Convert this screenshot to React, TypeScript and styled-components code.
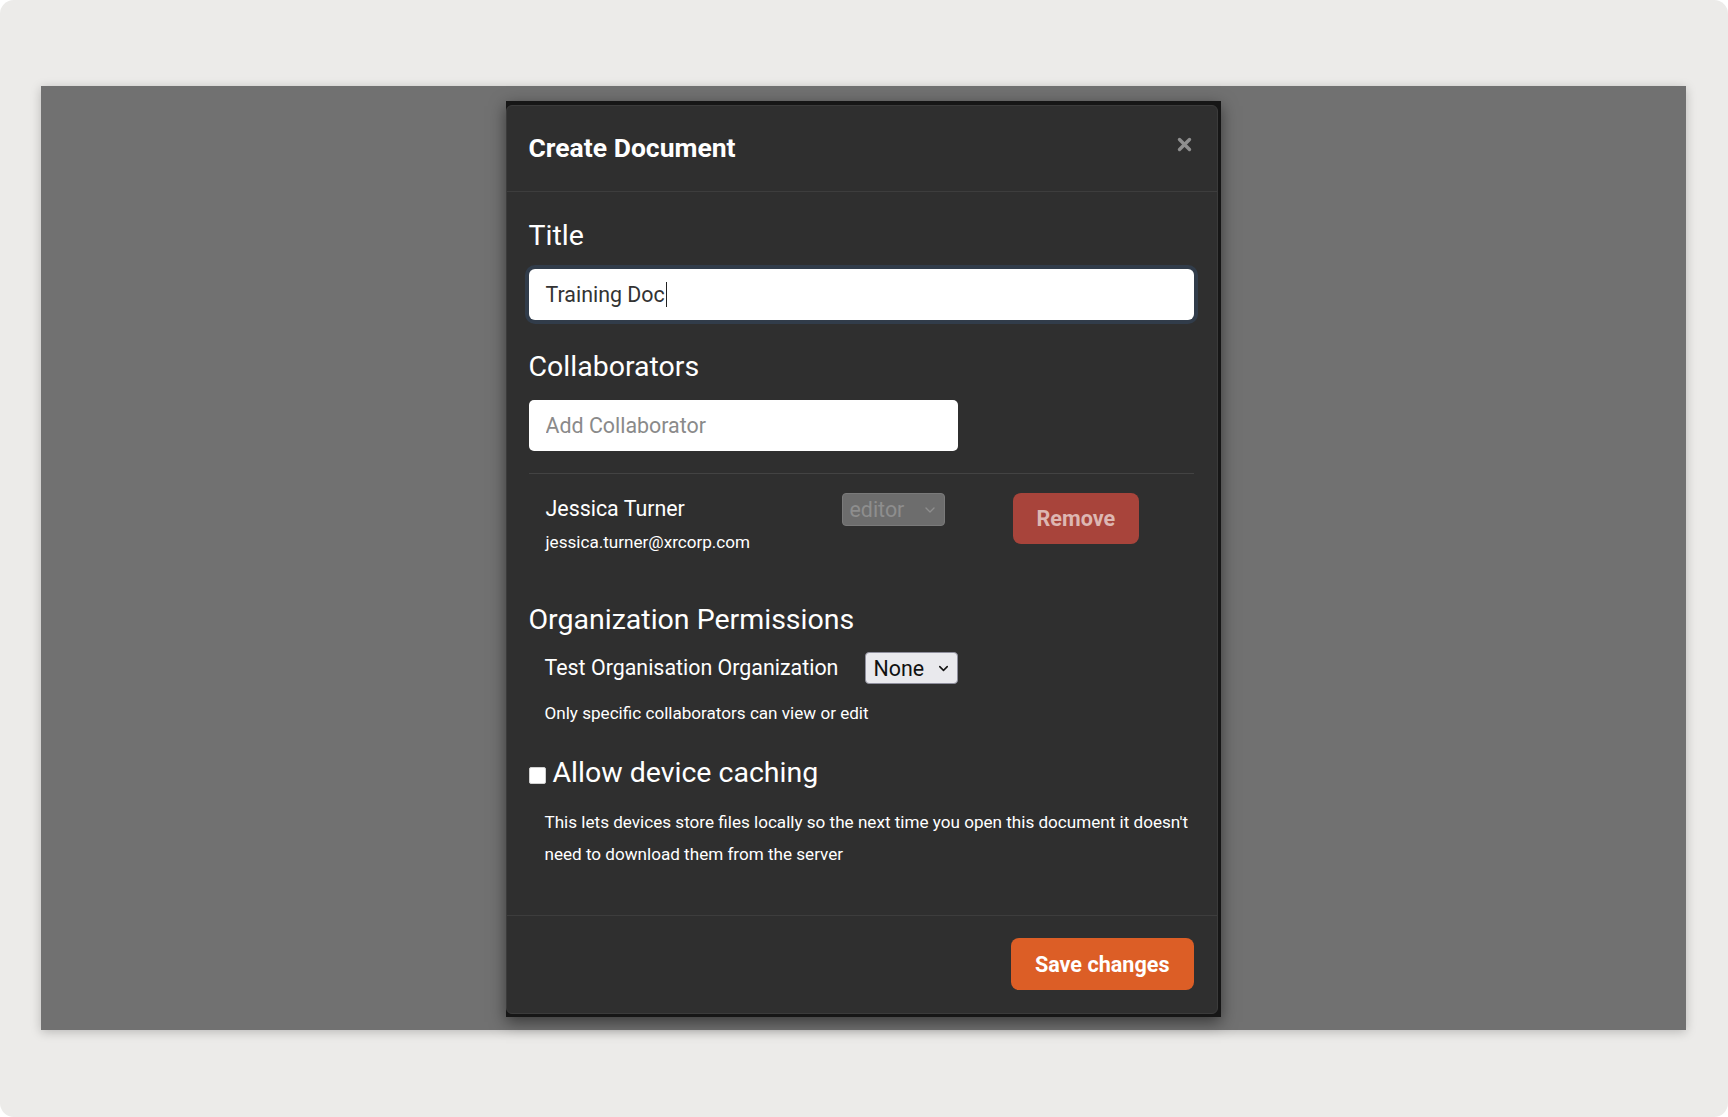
import React from "react"
import styled, { createGlobalStyle } from "styled-components"
import { ChevronDown } from "lucide-react"

const GlobalStyle = createGlobalStyle`
  html, body {
    margin: 0;
    padding: 0;
    background: #ffffff;
  }
  body {
    font-family: Roboto, "Liberation Sans", Arial, sans-serif;
    -webkit-font-smoothing: antialiased;
  }
  * {
    box-sizing: border-box;
  }
`

const App: React.FC = () => {
  return (
    <>
      <GlobalStyle />
      <Page>
        <Backdrop>
          <Dialog>
            <Content>
              <Header>
                <DialogTitle>Create Document</DialogTitle>
                <CloseButton aria-label="Close">
                  <svg width="15" height="15" viewBox="0 0 15 15">
                    <path
                      d="M2.5 2.5 L12.5 12.5 M12.5 2.5 L2.5 12.5"
                      stroke="#8e8e8e"
                      strokeWidth="3.4"
                      strokeLinecap="round"
                    />
                  </svg>
                </CloseButton>
              </Header>

              <Body>
                <Label>Title</Label>
                <TextField $focused>
                  Training Doc
                  <Caret />
                </TextField>

                <Label $top={30}>Collaborators</Label>
                <CollabInput placeholder="Add Collaborator" />

                <Divider />

                <CollabRow>
                  <Person>
                    <PersonName>Jessica Turner</PersonName>
                    <PersonEmail>jessica.turner@xrcorp.com</PersonEmail>
                  </Person>
                  <SelectBox $disabled $width={103}>
                    editor
                    <ChevronDown size={16} strokeWidth={2} />
                  </SelectBox>
                  <Button $variant="danger" disabled>
                    Remove
                  </Button>
                </CollabRow>

                <Label $top={50} $bottom={15}>
                  Organization Permissions
                </Label>
                <OrgRow>
                  <OrgName>Test Organisation Organization</OrgName>
                  <SelectBox $width={93}>
                    None
                    <ChevronDown size={15} strokeWidth={2.4} />
                  </SelectBox>
                </OrgRow>
                <Hint>Only specific collaborators can view or edit</Hint>

                <CheckRow>
                  <Checkbox type="checkbox" />
                  <CheckLabel>Allow device caching</CheckLabel>
                </CheckRow>
                <Paragraph>
                  This lets devices store files locally so the next time you
                  open this document it doesn't need to download them from the
                  server
                </Paragraph>
              </Body>

              <Footer>
                <Button $variant="primary">Save changes</Button>
              </Footer>
            </Content>
          </Dialog>
        </Backdrop>
      </Page>
    </>
  )
}

export default App

const Page = styled.div`
  width: 1728px;
  height: 1117px;
  background: #ecebe9;
  border-radius: 14px;
  padding: 86px 42px 87px 41px;
  display: flex;
`

const Backdrop = styled.div`
  flex: 1;
  background: #717171;
  box-shadow: 0 2px 10px rgba(0, 0, 0, 0.22);
  display: flex;
  justify-content: center;
  align-items: flex-start;
  padding-top: 15px;
`

const Dialog = styled.div`
  width: 715px;
  margin-right: 1px;
  background: #161616;
  padding: 4px 3px 3px 0;
  box-shadow: 0 5px 15px rgba(0, 0, 0, 0.5);
`

const Content = styled.div`
  background: #2f2f2f;
  border: 1px solid #3b3b3b;
  border-radius: 6px;
  color: #ffffff;
`

const Header = styled.div`
  height: 86px;
  padding: 0 25px 0 22px;
  display: flex;
  align-items: center;
  justify-content: space-between;
  border-bottom: 1px solid #3d3d3d;
`

const DialogTitle = styled.h4`
  margin: -2px 0 0;
  font-size: 26.5px;
  font-weight: 700;
  line-height: 32px;
  color: #ffffff;
`

const CloseButton = styled.button`
  border: 0;
  background: none;
  padding: 0;
  margin-top: -8px;
  display: flex;
  cursor: pointer;
`

const Body = styled.div`
  padding: 27px 23px 45px 22px;
`

const Label = styled.h5<{ $top?: number; $bottom?: number }>`
  margin: ${(p) => p.$top ?? 0}px 0 ${(p) => p.$bottom ?? 16}px;
  font-size: 28.5px;
  font-weight: 400;
  line-height: 34px;
  color: #ffffff;
`

const TextField = styled.div<{ $focused?: boolean }>`
  height: 51px;
  background: #ffffff;
  border-radius: 6px;
  padding: 0 17px;
  display: flex;
  align-items: center;
  font-size: 21.4px;
  color: #333333;
  box-shadow: ${(p) => (p.$focused ? "0 0 0 4px #313c4a" : "none")};
`

const Caret = styled.span`
  display: inline-block;
  width: 1px;
  height: 25px;
  margin-left: 1px;
  background: #222222;
`

const CollabInput = styled.input`
  display: block;
  width: 429px;
  height: 51px;
  border: 0;
  border-radius: 5px;
  padding: 0 17px;
  font-family: inherit;
  font-size: 21.4px;
  color: #333333;
  background: #ffffff;
  outline: none;

  &::placeholder {
    color: #8a8a8a;
  }
`

const Divider = styled.hr`
  margin: 22px 0 0;
  border: 0;
  border-top: 1px solid #434343;
`

const CollabRow = styled.div`
  display: grid;
  grid-template-columns: 296px 171px auto;
  align-items: start;
  padding: 19px 0 0 17px;
`

const Person = styled.div`
  padding-top: 3px;
`

const PersonName = styled.div`
  font-size: 21.4px;
  line-height: 26px;
`

const PersonEmail = styled.div`
  margin-top: 9px;
  font-size: 17.1px;
  line-height: 22px;
`

const SelectBox = styled.div<{ $disabled?: boolean; $width: number }>`
  width: ${(p) => p.$width}px;
  height: ${(p) => (p.$disabled ? 33 : 32)}px;
  padding: 0 6px 0 7px;
  display: flex;
  align-items: center;
  justify-content: space-between;
  font-size: 21.4px;
  border-radius: 4px;
  border: 1px solid ${(p) => (p.$disabled ? "#7a7a7a" : "#8f8f9d")};
  background: ${(p) => (p.$disabled ? "#6d6d6d" : "#e9e9ed")};
  color: ${(p) => (p.$disabled ? "#8e8e8e" : "#111111")};
`

const Button = styled.button<{ $variant: "primary" | "danger" }>`
  height: ${(p) => (p.$variant === "primary" ? 52 : 51)}px;
  padding: 0 24px;
  border: 0;
  border-radius: 8px;
  font-family: inherit;
  font-size: 21.6px;
  font-weight: 700;
  cursor: pointer;
  background: ${(p) => (p.$variant === "primary" ? "#dc5e26" : "#a8443b")};
  color: ${(p) => (p.$variant === "primary" ? "#ffffff" : "#ddb7b2")};
  justify-self: start;
`

const OrgRow = styled.div`
  display: flex;
  align-items: center;
  gap: 27px;
  padding-left: 16px;
`

const OrgName = styled.span`
  font-size: 21.4px;
  line-height: 26px;
`

const Hint = styled.p`
  margin: 18px 0 0;
  padding-left: 16px;
  font-size: 17.1px;
  line-height: 22px;
`

const CheckRow = styled.div`
  display: flex;
  align-items: flex-start;
  gap: 7px;
  margin-top: 32px;
`

const Checkbox = styled.input`
  appearance: none;
  width: 17px;
  height: 17px;
  margin: 11px 0 0;
  background: #ffffff;
  border: 1px solid #d0d0d0;
  border-radius: 2px;
`

const CheckLabel = styled.span`
  font-size: 28.5px;
  line-height: 34px;
`

const Paragraph = styled.p`
  margin: 17px 0 0;
  padding-left: 16px;
  font-size: 17.1px;
  line-height: 31.6px;
`

const Footer = styled.div`
  display: flex;
  justify-content: flex-end;
  padding: 22px 23px 23px;
  border-top: 1px solid #3d3d3d;
`
